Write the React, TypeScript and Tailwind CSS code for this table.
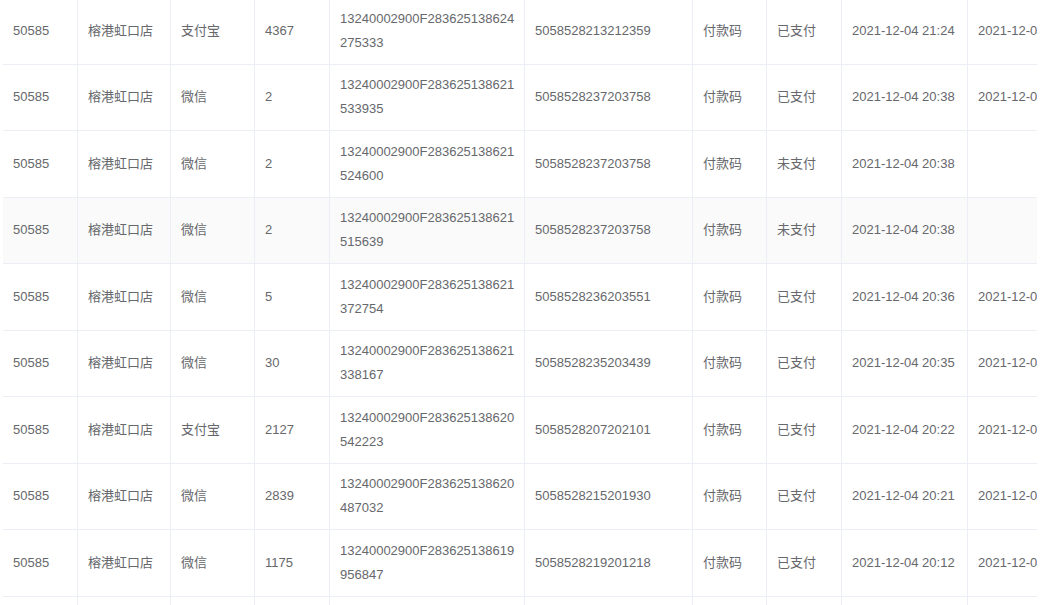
const rows = [
  { ch: '支付宝', amt: '4367', no: '13240002900F283625138624275333', tx: '5058528213212359', st: '已支付', t: '2021-12-04 21:24', pt: '2021-12-0' },
  { ch: '微信', amt: '2', no: '13240002900F283625138621533935', tx: '5058528237203758', st: '已支付', t: '2021-12-04 20:38', pt: '2021-12-0' },
  { ch: '微信', amt: '2', no: '13240002900F283625138621524600', tx: '5058528237203758', st: '未支付', t: '2021-12-04 20:38', pt: '' },
  { ch: '微信', amt: '2', no: '13240002900F283625138621515639', tx: '5058528237203758', st: '未支付', t: '2021-12-04 20:38', pt: '' },
  { ch: '微信', amt: '5', no: '13240002900F283625138621372754', tx: '5058528236203551', st: '已支付', t: '2021-12-04 20:36', pt: '2021-12-0' },
  { ch: '微信', amt: '30', no: '13240002900F283625138621338167', tx: '5058528235203439', st: '已支付', t: '2021-12-04 20:35', pt: '2021-12-0' },
  { ch: '支付宝', amt: '2127', no: '13240002900F283625138620542223', tx: '5058528207202101', st: '已支付', t: '2021-12-04 20:22', pt: '2021-12-0' },
  { ch: '微信', amt: '2839', no: '13240002900F283625138620487032', tx: '5058528215201930', st: '已支付', t: '2021-12-04 20:21', pt: '2021-12-0' },
  { ch: '微信', amt: '1175', no: '13240002900F283625138619956847', tx: '5058528219201218', st: '已支付', t: '2021-12-04 20:12', pt: '2021-12-0' },
  { ch: '', amt: '', no: '', tx: '', st: '', t: '', pt: '' },
];

function Cell({ children, wrap }: { children?: React.ReactNode; wrap?: boolean }) {
  return (
    <div className={`flex items-center pl-[10px] border-r border-[#ebeef5] min-w-0 ${wrap ? 'pr-[6px]' : 'pr-[10px]'}`}>
      <div className={wrap ? 'break-all leading-[24px]' : 'whitespace-nowrap leading-[24px]'}>{children}</div>
    </div>
  );
}

export default function App() {
  return (
    <div
      className="h-[605px] w-[1043px] overflow-hidden bg-white"
      style={{ fontFamily: '"Liberation Sans", Arial, "Noto Sans CJK SC", sans-serif' }}
    >
      <div className="ml-[3px] w-[1034px] overflow-hidden mt-[-2px] text-[13px] text-[#66686c]">
        {rows.map((r, i) => (
          <div
            key={i}
            className={`grid grid-cols-[75px_93px_84px_75px_195px_168px_74px_75px_126px_160px] h-[66.5px] border-b border-[#ebeef5] ${
              i === 3 ? 'bg-[#fafafa]' : 'bg-white'
            }`}
          >
            <Cell>{r.ch ? '50585' : ''}</Cell>
            <Cell>{r.ch ? '榕港虹口店' : ''}</Cell>
            <Cell>{r.ch}</Cell>
            <Cell>{r.amt}</Cell>
            <Cell wrap>{r.no}</Cell>
            <Cell>{r.tx}</Cell>
            <Cell>{r.ch ? '付款码' : ''}</Cell>
            <Cell>{r.st}</Cell>
            <Cell>{r.t}</Cell>
            <Cell>{r.pt}</Cell>
          </div>
        ))}
      </div>
    </div>
  );
}
